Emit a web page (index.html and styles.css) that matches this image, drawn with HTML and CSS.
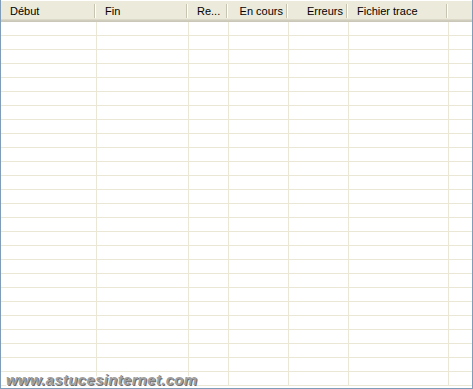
FILE: index.html
```html
<!DOCTYPE html>
<html lang="fr">
<head>
  <meta charset="UTF-8" />
  <title>Journal</title>
  <link rel="stylesheet" href="styles.css">
</head>
<body>
  <div class="list-view">
    <div class="header">
      <div class="col c1">Début</div>
      <div class="col c2">Fin</div>
      <div class="col c3">Re...</div>
      <div class="col c4 right">En cours</div>
      <div class="col c5 right">Erreurs</div>
      <div class="col c6">Fichier trace</div>
      <div class="col c7"></div>
    </div>
    <div class="rows" id="rows"></div>
    <div class="watermark">www.astucesinternet.com</div>
  </div>

  <script>
    const rows = document.getElementById("rows");
    for (let i = 0; i < 26; i++) {
      const row = document.createElement("div");
      row.className = "row";
      for (let c = 1; c <= 7; c++) {
        const cell = document.createElement("div");
        cell.className = "cell c" + c;
        row.appendChild(cell);
      }
      rows.appendChild(row);
    }
  </script>
</body>
</html>
```

FILE: styles.css
```css
body {
  margin: 0;
  font-family: 'Liberation Sans', Arial, sans-serif;
  background: #ffffff;
}

.list-view {
  position: relative;
  width: 471px;
  height: 388px;
  border: 1px solid #7f9db9;
  border-top: none;
  overflow: hidden;
  background: #ffffff;
}

.header {
  display: grid;
  grid-template-columns: 96px 92px 40px 60px 60px 100px minmax(0, 1fr);
  height: 22px;
  background: linear-gradient(to bottom, #ffffff 0, #ffffff 1px, #ebeadb 1px, #ebeadb 19px, #e2dfcd 19px, #d6d2c2 20px, #cbc7b8 21px);
  font-size: 11px;
  color: #000;
}

.header .col {
  position: relative;
  min-width: 0;
  display: flex;
  align-items: center;
  padding: 0 7px 1px 8px;
  white-space: nowrap;
  overflow: hidden;
}

.header .c1 {
  padding-left: 9px;
}

.header .right {
  justify-content: flex-end;
  padding-right: 6px;
}

.header .col::after {
  content: "";
  position: absolute;
  right: 1px;
  top: 4px;
  height: 14px;
  width: 1px;
  background: #c7c5b2;
  border-right: 1px solid #ffffff;
}

.header .c7::after {
  display: none;
}

.row {
  display: grid;
  grid-template-columns: 96px 92px 40px 60px 60px 100px minmax(0, 1fr);
  height: 13px;
  border-bottom: 1px solid #ebe7d5;
}

.cell {
  border-right: 1px solid #ebe7d5;
}

.cell.c7 {
  border-right: none;
}

.watermark {
  position: absolute;
  left: 5px;
  bottom: 0;
  font-size: 15px;
  font-weight: bold;
  font-style: italic;
  letter-spacing: 0.3px;
  color: #a0a0a0;
  line-height: 16px;
  text-shadow: 1px 1px 0 #6e6e6e, -1px -1px 0 #fff, 1px -1px 0 #fff, -1px 1px 0 #fff;
}
```
